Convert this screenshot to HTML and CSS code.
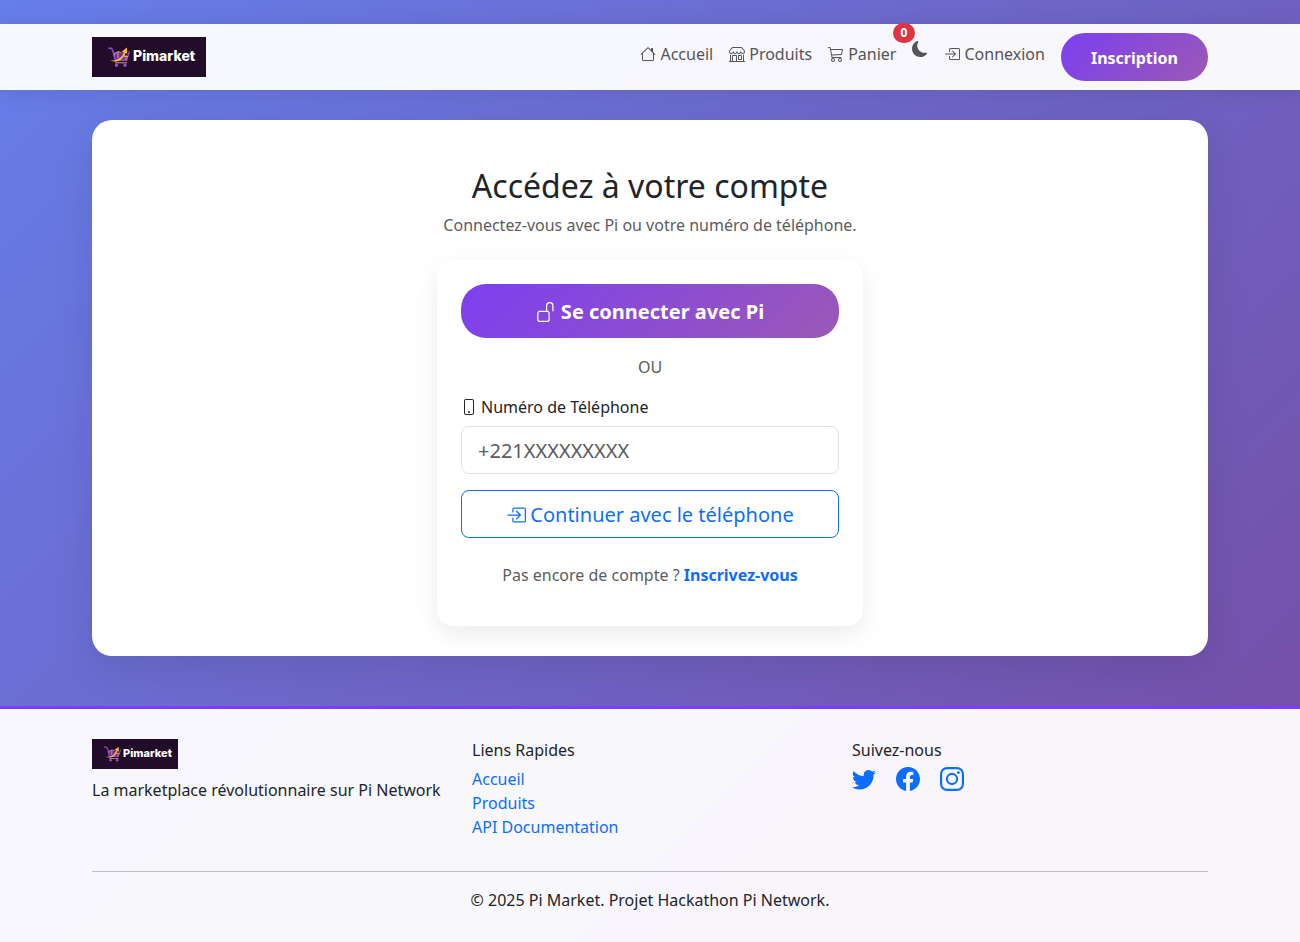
FILE: index.html
```html
<!DOCTYPE html>
<html lang="fr">
<head>
<meta charset="utf-8">
<meta name="viewport" content="width=device-width, initial-scale=1">
<title>Pi Market - Connexion</title>
<link rel="stylesheet" href="styles.css">
</head>
<body>
<svg class="sprite" aria-hidden="true">
  <symbol id="house" viewBox="0 0 16 16"><path d="M8.707 1.5a1 1 0 0 0-1.414 0L.646 8.146a.5.5 0 0 0 .708.708L2 8.207V13.5A1.5 1.5 0 0 0 3.5 15h9a1.5 1.5 0 0 0 1.5-1.5V8.207l.646.647a.5.5 0 0 0 .708-.708L13 5.793V2.5a.5.5 0 0 0-.5-.5h-1a.5.5 0 0 0-.5.5v1.293zM13 7.207V13.5a.5.5 0 0 1-.5.5h-9a.5.5 0 0 1-.5-.5V7.207l5-5z"/></symbol>
  <symbol id="shop" viewBox="0 0 16 16"><path d="M2.97 1.35A1 1 0 0 1 3.73 1h8.54a1 1 0 0 1 .76.35l2.609 3.044A1.5 1.5 0 0 1 16 5.37v.255a2.375 2.375 0 0 1-4.25 1.458A2.37 2.37 0 0 1 9.875 8 2.37 2.37 0 0 1 8 7.083 2.37 2.37 0 0 1 6.125 8a2.37 2.37 0 0 1-1.875-.917A2.375 2.375 0 0 1 0 5.625V5.37a1.5 1.5 0 0 1 .361-.976zm1.78 4.275a1.375 1.375 0 0 0 2.75 0 .5.5 0 0 1 1 0 1.375 1.375 0 0 0 2.75 0 .5.5 0 0 1 1 0 1.375 1.375 0 1 0 2.75 0V5.37a.5.5 0 0 0-.12-.325L12.27 2H3.73L1.12 5.045A.5.5 0 0 0 1 5.37v.255a1.375 1.375 0 0 0 2.75 0 .5.5 0 0 1 1 0M1.5 8.5A.5.5 0 0 1 2 9v6h1v-5a1 1 0 0 1 1-1h3a1 1 0 0 1 1 1v5h6V9a.5.5 0 0 1 1 0v6h.5a.5.5 0 0 1 0 1H.5a.5.5 0 0 1 0-1H1V9a.5.5 0 0 1 .5-.5M4 15h3v-5H4zm5-5a1 1 0 0 1 1-1h2a1 1 0 0 1 1 1v3a1 1 0 0 1-1 1h-2a1 1 0 0 1-1-1zm3 0h-2v3h2z"/></symbol>
  <symbol id="cart" viewBox="0 0 16 16"><path d="M0 1.5A.5.5 0 0 1 .5 1H2a.5.5 0 0 1 .485.379L2.89 3H14.5a.5.5 0 0 1 .49.598l-1 5a.5.5 0 0 1-.465.401l-9.397.472L4.415 11H13a.5.5 0 0 1 0 1H4a.5.5 0 0 1-.491-.408L2.01 3.607 1.61 2H.5a.5.5 0 0 1-.5-.5M3.102 4l.84 4.479 9.144-.459L13.89 4zM5 12a2 2 0 1 0 0 4 2 2 0 0 0 0-4m7 0a2 2 0 1 0 0 4 2 2 0 0 0 0-4m-7 1a1 1 0 1 1 0 2 1 1 0 0 1 0-2m7 0a1 1 0 1 1 0 2 1 1 0 0 1 0-2"/></symbol>
  <symbol id="moon" viewBox="0 0 16 16"><path d="M6 .278a.77.77 0 0 1 .08.858 7.2 7.2 0 0 0-.878 3.46c0 4.021 3.278 7.277 7.318 7.277q.792-.001 1.533-.16a.79.79 0 0 1 .81.316.73.73 0 0 1-.031.893A8.35 8.35 0 0 1 8.344 16C3.734 16 0 12.286 0 7.71 0 4.266 2.114 1.312 5.124.06A.75.75 0 0 1 6 .278"/></symbol>
  <symbol id="enter" viewBox="0 0 16 16"><path d="M6 3.5a.5.5 0 0 1 .5-.5h8a.5.5 0 0 1 .5.5v9a.5.5 0 0 1-.5.5h-8a.5.5 0 0 1-.5-.5v-2a.5.5 0 0 0-1 0v2A1.5 1.5 0 0 0 6.5 14h8a1.5 1.5 0 0 0 1.5-1.5v-9A1.5 1.5 0 0 0 14.5 2h-8A1.5 1.5 0 0 0 5 3.5v2a.5.5 0 0 0 1 0z"/><path d="M11.854 8.354a.5.5 0 0 0 0-.708l-3-3a.5.5 0 1 0-.708.708L10.293 7.5H1.5a.5.5 0 0 0 0 1h8.793l-2.147 2.146a.5.5 0 0 0 .708.708z"/></symbol>
  <symbol id="unlock" viewBox="0 0 16 16"><path d="M11 1a2 2 0 0 0-2 2v4a2 2 0 0 1 2 2v5a2 2 0 0 1-2 2H3a2 2 0 0 1-2-2V9a2 2 0 0 1 2-2h5V3a3 3 0 0 1 6 0v4a.5.5 0 0 1-1 0V3a2 2 0 0 0-2-2M3 8a1 1 0 0 0-1 1v5a1 1 0 0 0 1 1h6a1 1 0 0 0 1-1V9a1 1 0 0 0-1-1z"/></symbol>
  <symbol id="phone" viewBox="0 0 16 16"><path d="M11 1a1 1 0 0 1 1 1v12a1 1 0 0 1-1 1H5a1 1 0 0 1-1-1V2a1 1 0 0 1 1-1zM5 0a2 2 0 0 0-2 2v12a2 2 0 0 0 2 2h6a2 2 0 0 0 2-2V2a2 2 0 0 0-2-2z"/><path d="M8 14a1 1 0 1 0 0-2 1 1 0 0 0 0 2"/></symbol>
  <symbol id="twitter" viewBox="0 0 16 16"><path d="M5.026 15c6.038 0 9.341-5.003 9.341-9.334q.002-.211-.006-.422A6.7 6.7 0 0 0 16 3.542a6.7 6.7 0 0 1-1.889.518 3.3 3.3 0 0 0 1.447-1.817 6.5 6.5 0 0 1-2.087.793A3.286 3.286 0 0 0 7.875 6.03a9.32 9.32 0 0 1-6.767-3.429 3.29 3.29 0 0 0 1.018 4.382A3.3 3.3 0 0 1 .64 6.575v.045a3.29 3.29 0 0 0 2.632 3.218 3.2 3.2 0 0 1-.865.115 3 3 0 0 1-.614-.057 3.28 3.28 0 0 0 3.067 2.277A6.6 6.6 0 0 1 .78 13.58a6 6 0 0 1-.78-.045A9.34 9.34 0 0 0 5.026 15"/></symbol>
  <symbol id="facebook" viewBox="0 0 16 16"><path d="M16 8.049c0-4.446-3.582-8.05-8-8.05C3.58 0-.002 3.603-.002 8.05c0 4.017 2.926 7.347 6.75 7.951v-5.625h-2.03V8.05H6.75V6.275c0-2.017 1.195-3.131 3.022-3.131.876 0 1.791.157 1.791.157v1.98h-1.009c-.993 0-1.303.621-1.303 1.258v1.51h2.218l-.354 2.326H9.25V16c3.824-.604 6.75-3.934 6.75-7.951"/></symbol>
  <symbol id="instagram" viewBox="0 0 16 16"><rect x=".72" y=".72" width="14.56" height="14.56" rx="4" fill="none" stroke="currentColor" stroke-width="1.44"/><circle cx="8" cy="8" r="3.39" fill="none" stroke="currentColor" stroke-width="1.44"/><circle cx="12.27" cy="3.73" r=".96"/></symbol>
  <symbol id="logo-cart" viewBox="0 0 22 20">
    <path d="M4.5 5h12l1.5 8H7z" fill="#6d3399"/>
    <path d="M.8 1.2h2.7l1.5 3 2 9h11.500L21.200 5" fill="none" stroke="#9348c6" stroke-width="1.5" stroke-linejoin="round" stroke-linecap="round"/>
    <path d="M6 8.500C8 4 12 4 13 6M10 5v6M18 8v5M16 9.500h4M7 15.800h12" fill="none" stroke="#e8a06c" stroke-width="1"/>
    <path d="M2 13.500c7 .5 12-2.500 14-8.500l-2.500-.3L19 .5l.2 6.500-1.500-1.300C15.500 12.500 9.500 16.500 2 13.500z" fill="#fdbb3c"/>
    <circle cx="8.5" cy="18.200" r="1.6" fill="#a050d6"/><circle cx="17" cy="18.200" r="1.6" fill="#a050d6"/>
  </symbol>
</svg>

<header class="navbar">
  <div class="container navbar-row">
    <a class="logo" href="#"><svg class="logo-mark"><use href="#logo-cart"/></svg>Pimarket</a>
    <nav class="nav">
      <a class="nav-link" href="#"><svg class="icon"><use href="#house"/></svg>Accueil</a>
      <a class="nav-link" href="#"><svg class="icon"><use href="#shop"/></svg>Produits</a>
      <a class="nav-link cart" href="#"><svg class="icon"><use href="#cart"/></svg>Panier<span class="badge">0</span></a>
      <button class="theme" type="button" aria-label="Changer de thème"><svg class="icon"><use href="#moon"/></svg></button>
      <a class="nav-link" href="#"><svg class="icon"><use href="#enter"/></svg>Connexion</a>
      <a class="signup" href="#">Inscription</a>
    </nav>
  </div>
</header>

<main class="container">
  <section class="panel">
    <h1 class="title">Accédez à votre compte</h1>
    <p class="subtitle">Connectez-vous avec Pi ou votre numéro de téléphone.</p>
    <form class="login">
      <button class="btn btn-pi" type="button"><svg class="icon icon-md"><use href="#unlock"/></svg>Se connecter avec Pi</button>
      <p class="or">OU</p>
      <label class="label" for="tel"><svg class="icon"><use href="#phone"/></svg>Numéro de Téléphone</label>
      <input class="input" id="tel" type="tel" placeholder="+221XXXXXXXXX">
      <button class="btn btn-phone" type="submit"><svg class="icon icon-md"><use href="#enter"/></svg>Continuer avec le téléphone</button>
      <p class="register">Pas encore de compte ? <a href="#">Inscrivez-vous</a></p>
    </form>
  </section>
</main>

<footer class="footer">
  <div class="container">
    <div class="footer-grid">
      <div>
        <div class="logo logo-sm"><svg class="logo-mark"><use href="#logo-cart"/></svg>Pimarket</div>
        <p class="tagline">La marketplace révolutionnaire sur Pi Network</p>
      </div>
      <div>
        <h2 class="footer-title">Liens Rapides</h2>
        <ul class="links">
          <li><a href="#">Accueil</a></li>
          <li><a href="#">Produits</a></li>
          <li><a href="#">API Documentation</a></li>
        </ul>
      </div>
      <div>
        <h2 class="footer-title">Suivez-nous</h2>
        <div class="social">
          <a href="#" aria-label="Twitter"><svg class="icon icon-lg"><use href="#twitter"/></svg></a>
          <a href="#" aria-label="Facebook"><svg class="icon icon-lg"><use href="#facebook"/></svg></a>
          <a href="#" aria-label="Instagram"><svg class="icon icon-lg"><use href="#instagram"/></svg></a>
        </div>
      </div>
    </div>
    <p class="copyright">© 2025 Pi Market. Projet Hackathon Pi Network.</p>
  </div>
</footer>
</body>
</html>
```
FILE: styles.css
```css
* { box-sizing: border-box; }
body {
  margin: 0;
  padding-top: 24px;
  min-height: 100vh;
  font: 16px/24px "Noto Sans", "Liberation Sans", sans-serif;
  color: #212529;
  background: linear-gradient(135deg, #667eea 0%, #764ba2 100%);
}
h1, h2, p, ul { margin: 0; }
a { color: #0d6efd; text-decoration: none; }
.sprite { position: absolute; width: 0; height: 0; }
.container { width: 100%; max-width: 1140px; margin: 0 auto; padding: 0 12px; }

.icon { width: 16px; height: 16px; flex: none; fill: currentColor; display: block; }
.icon-md { width: 20px; height: 20px; }
.icon-lg { width: 24px; height: 24px; }

.logo {
  display: flex; align-items: center; gap: 3px;
  width: 114px; height: 40px; padding: 0 0 2px 16px;
  background: #210d29; color: #fff;
  font: 800 14px/20px Inter, "Open Sans", sans-serif;
}
.logo-mark { width: 22px; height: 20px; margin-top: 2px; flex: none; }
.logo-sm { width: 86px; height: 30px; padding-left: 12px; gap: 2px; font-size: 11px; }
.logo-sm .logo-mark { width: 17px; height: 16px; }

.navbar { background: rgba(255, 255, 255, .95); box-shadow: 0 2px 20px rgba(0, 0, 0, .1); padding: 9px 0; }
.navbar-row { display: flex; flex-wrap: wrap; align-items: center; justify-content: space-between; }
.nav { display: flex; flex-wrap: wrap; align-items: flex-start; gap: 0 16px; }
.nav-link { display: flex; align-items: center; gap: 4px; padding: 9px 0; color: #555; }
.cart { position: relative; }
.badge {
  position: absolute; top: -10px; right: -19px;
  padding: 4px 8px; border-radius: 10px;
  background: #dc3545; color: #fff; font-size: 12px; font-weight: 700; line-height: 12px;
}
.theme { padding: 8px 0; border: 0; background: none; color: #555; }
.signup {
  padding: 13px 30px 11px; border-radius: 25px;
  background: linear-gradient(135deg, #7c3fef, #9b59b6);
  color: #fff; font-weight: 700;
}

.panel {
  margin: 30px 0 50px; padding: 47px 30px 30px;
  border-radius: 20px; background: #fff;
  box-shadow: 0 10px 40px rgba(0, 0, 0, .1);
}
.title { text-align: center; font-size: 32px; font-weight: 400; line-height: 38px; }
.subtitle { margin: 8px 0 23px; text-align: center; color: #5a5c5f; }
.login {
  display: flex; flex-direction: column;
  width: 100%; max-width: 426px; margin: 0 auto; padding: 24px 24px 39px;
  border-radius: 16px; background: #fff;
  box-shadow: 0 8px 24px rgba(0, 0, 0, .08);
}
.btn {
  display: flex; align-items: center; justify-content: center;
  font-family: inherit; font-size: 20px; line-height: 30px; cursor: pointer;
}
.btn-pi {
  gap: 5px; padding: 13px 30px 11px; border: 0; border-radius: 25px;
  background: linear-gradient(135deg, #7c3fef, #9b59b6); color: #fff; font-weight: 700;
}
.or { margin: 17px 0 16px; text-align: center; color: #5a5c5f; }
.label { display: flex; align-items: center; gap: 4px; margin-bottom: 7px; }
.input {
  width: 100%; height: 48px; padding: 8px 16px;
  border: 1px solid #dee2e6; border-radius: 8px; background: #fff;
  font: 20px/30px "Noto Sans", sans-serif; color: #212529;
}
.input::placeholder { color: #595c5f; opacity: 1; }
.btn-phone {
  gap: 4px; margin-top: 16px; padding: 9px 16px 7px;
  border: 1px solid #0d6efd; border-radius: 8px; background: #fff; color: #0d6efd;
}
.register { margin-top: 25px; text-align: center; color: #5a5c5f; }
.register a { font-weight: 700; }

.footer { padding: 30px 0; border-top: 3px solid #7c3fef; background: rgba(255, 255, 255, .95); }
.footer-grid {
  display: grid; grid-template-columns: repeat(3, 1fr); gap: 24px;
  padding-bottom: 32px; border-bottom: 1px solid #bebdc2;
}
.tagline { margin-top: 9px; }
.footer-title { margin-bottom: 6px; font-size: 16px; font-weight: 400; line-height: 22px; }
.links { padding: 0; list-style: none; }
.social { display: flex; gap: 20px; }
.copyright { margin-top: 16px; text-align: center; }

@media (max-width: 767px) {
  .footer-grid { grid-template-columns: 1fr; }
}
```
